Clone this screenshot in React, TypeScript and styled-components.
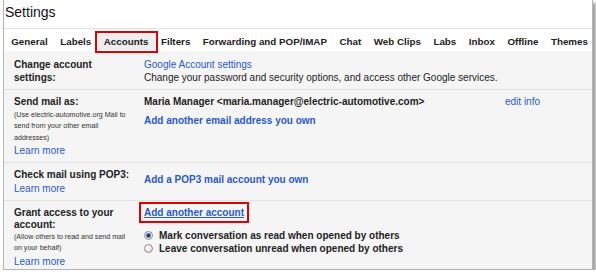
import React from 'react';
import styled, { createGlobalStyle } from 'styled-components';

const GlobalStyle = createGlobalStyle`
  html, body {
    margin: 0;
    padding: 0;
    background: #fff;
  }
  body {
    font-family: "Liberation Sans", Arial, sans-serif;
    color: #222;
  }
`;

const Panel = styled.div`
  margin-left: 3px;
  width: 588px;
  background: #fff;
  border: 1px solid #b5b5b5;
  border-top: none;
  box-shadow: 3px 3px 3px rgba(0, 0, 0, 0.38);
`;

const Title = styled.div`
  height: 28px;
  line-height: 24px;
  font-size: 14px;
  padding-left: 1px;
  color: #111;
  border-bottom: 1px solid #e2e2e2;
`;

const Tabs = styled.div`
  display: flex;
  height: 22px;
  box-sizing: border-box;
  padding: 5px 0 0 1px;
`;

const Tab = styled.div<{ $active?: boolean }>`
  height: 16px;
  line-height: 16px;
  padding: 0 6.25px;
  font-size: 9.8px;
  font-weight: bold;
  color: #222;
  white-space: nowrap;
  background: ${(p) => (p.$active ? '#eeeeee' : 'transparent')};
  outline: ${(p) => (p.$active ? '2px solid #e10000' : 'none')};
  outline-offset: 1px;
`;

const Content = styled.div`
  background: #f5f5f5;
  padding-top: 2px;
`;

const Row = styled.div`
  display: grid;
  grid-template-columns: 140px 1fr;
  padding: 6px 0 5px;
  & + & {
    border-top: 1px solid #e3e3e3;
  }
  &:last-child {
    padding-bottom: 1px;
  }
`;

const Label = styled.div`
  padding-left: 10px;
`;

const LabelTitle = styled.div`
  font-size: 10px;
  font-weight: bold;
  line-height: 12.5px;
  color: #222;
`;

const Note = styled.div<{ $gap?: number }>`
  font-size: 7.1px;
  line-height: 11.5px;
  color: #333;
  margin-top: ${(p) => p.$gap ?? 0}px;
`;

const LearnMore = styled.a`
  display: block;
  font-size: 10px;
  line-height: 13px;
  color: #2a59cf;
  text-decoration: none;
`;

const Value = styled.div<{ $gap?: number }>`
  font-size: 10px;
  line-height: 12.5px;
  margin-top: ${(p) => p.$gap ?? 0}px;
`;

const Link = styled.a<{ $bold?: boolean; $boxed?: boolean }>`
  color: #2a59cf;
  font-weight: ${(p) => (p.$bold ? 'bold' : 'normal')};
  text-decoration: ${(p) => (p.$boxed ? 'underline' : 'none')};
  outline: ${(p) => (p.$boxed ? '2px solid #e10000' : 'none')};
  outline-offset: 3px;
`;

const Plain = styled.div<{ $bold?: boolean }>`
  font-weight: ${(p) => (p.$bold ? 'bold' : 'normal')};
  color: #222;
`;

const SenderLine = styled.div`
  display: grid;
  grid-template-columns: 361px auto;
  font-size: 10px;
  line-height: 12.5px;
`;

const Options = styled.div`
  margin-top: 10px;
`;

const Option = styled.label`
  display: flex;
  align-items: center;
  height: 13px;
  font-size: 10px;
  font-weight: bold;
  color: #222;
`;

const Radio = styled.span<{ $checked?: boolean }>`
  width: 9px;
  height: 9px;
  box-sizing: border-box;
  border-radius: 50%;
  border: 1px solid #8d8d8d;
  margin-right: 6px;
  background: ${(p) =>
    p.$checked
      ? 'radial-gradient(circle, #1c3c86 0 1.6px, #7f9bcf 2.2px, #e9eef6 3px, #fff 100%)'
      : 'radial-gradient(circle at 40% 35%, #ffffff, #d2d2d2)'};
`;

const tabs = [
  'General',
  'Labels',
  'Accounts',
  'Filters',
  'Forwarding and POP/IMAP',
  'Chat',
  'Web Clips',
  'Labs',
  'Inbox',
  'Offline',
  'Themes',
];

export default function App() {
  return (
    <>
      <GlobalStyle />
      <Panel>
        <Title>Settings</Title>
        <Tabs>
          {tabs.map((t) => (
            <Tab key={t} $active={t === 'Accounts'}>
              {t}
            </Tab>
          ))}
        </Tabs>
        <Content>
          <Row>
            <Label>
              <LabelTitle>
                Change account
                <br />
                settings:
              </LabelTitle>
            </Label>
            <Value>
              <div>
                <Link>Google Account settings</Link>
              </div>
              <Plain>Change your password and security options, and access other Google services.</Plain>
            </Value>
          </Row>

          <Row>
            <Label>
              <LabelTitle>Send mail as:</LabelTitle>
              <Note $gap={1}>
                (Use electric-automotive.org Mail to
                <br />
                send from your other email
                <br />
                addresses)
              </Note>
              <LearnMore>Learn more</LearnMore>
            </Label>
            <div>
              <SenderLine>
                <Plain $bold>Maria Manager &lt;maria.manager@electric-automotive.com&gt;</Plain>
                <Link>edit info</Link>
              </SenderLine>
              <Value $gap={6}>
                <Link $bold>Add another email address you own</Link>
              </Value>
            </div>
          </Row>

          <Row>
            <Label>
              <LabelTitle>Check mail using POP3:</LabelTitle>
              <LearnMore>Learn more</LearnMore>
            </Label>
            <Value $gap={5}>
              <Link $bold>Add a POP3 mail account you own</Link>
            </Value>
          </Row>

          <Row>
            <Label>
              <LabelTitle>
                Grant access to your
                <br />
                account:
              </LabelTitle>
              <Note>
                (Allow others to read and send mail
                <br />
                on your behalf)
              </Note>
              <LearnMore>Learn more</LearnMore>
            </Label>
            <div>
              <Value>
                <Link $bold $boxed>
                  Add another account
                </Link>
              </Value>
              <Options>
                <Option>
                  <Radio $checked />
                  Mark conversation as read when opened by others
                </Option>
                <Option>
                  <Radio />
                  Leave conversation unread when opened by others
                </Option>
              </Options>
            </div>
          </Row>
        </Content>
      </Panel>
    </>
  );
}
